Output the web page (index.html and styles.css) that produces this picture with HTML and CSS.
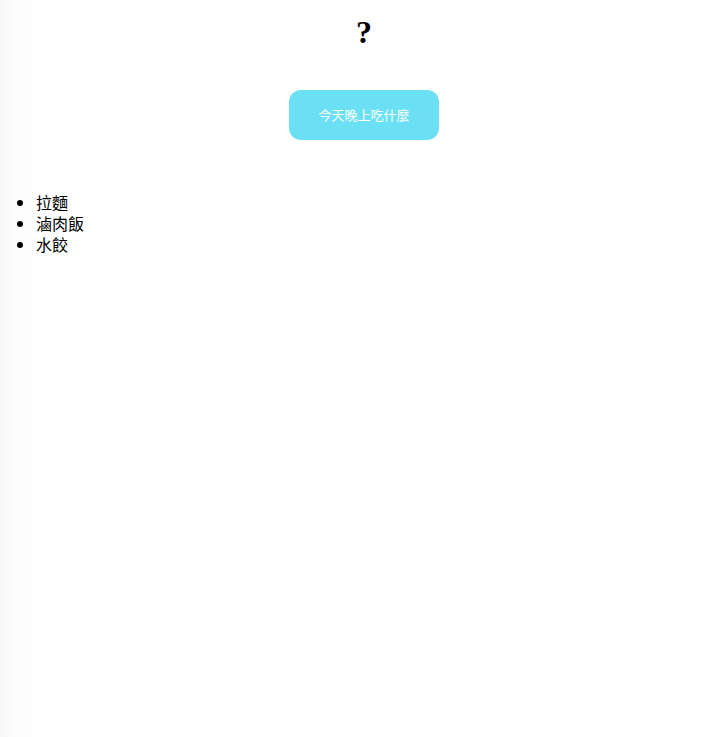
FILE: index.html
```html
<!DOCTYPE html>
<html lang="zh-Hant">
<head>
<meta charset="utf-8">
<title>今天晚上吃什麼</title>
<link rel="stylesheet" href="styles.css">
</head>
<body>
<div class="app">
  <div class="center">
    <h1 class="title">?</h1>
    <div class="actions">
      <button class="pick-btn" type="button">今天晚上吃什麼</button>
    </div>
  </div>
  <ul class="menu">
    <li>拉麵</li>
    <li>滷肉飯</li>
    <li>水餃</li>
  </ul>
</div>
</body>
</html>
```
FILE: styles.css
```css
html, body {
  height: 100%;
}
body {
  margin: 0;
  background: linear-gradient(to right, #f8f8f8 0, #fcfcfc 16px, #ffffff 36px);
  font-family: "Noto Sans CJK TC", "Noto Sans", sans-serif;
  color: #000;
}
.app {
  padding: 8px 0 0;
}
.center {
  padding-left: 11px;
}
.title {
  margin: 6px 0 0;
  text-align: center;
  font-family: "Liberation Serif", "DejaVu Serif", serif;
  font-size: 32px;
  font-weight: bold;
  line-height: 37px;
}
.actions {
  display: flex;
  justify-content: center;
  margin-top: 39px;
}
.pick-btn {
  width: 150px;
  height: 50px;
  border: none;
  border-radius: 12px;
  background: #6be0f4;
  color: #fff;
  font-family: "Noto Sans CJK TC", sans-serif;
  font-size: 13px;
  padding: 0 0 2px;
  cursor: pointer;
}
.menu {
  margin: 52px 0 0;
  padding-left: 36px;
  font-size: 16px;
  line-height: 21px;
}
```
